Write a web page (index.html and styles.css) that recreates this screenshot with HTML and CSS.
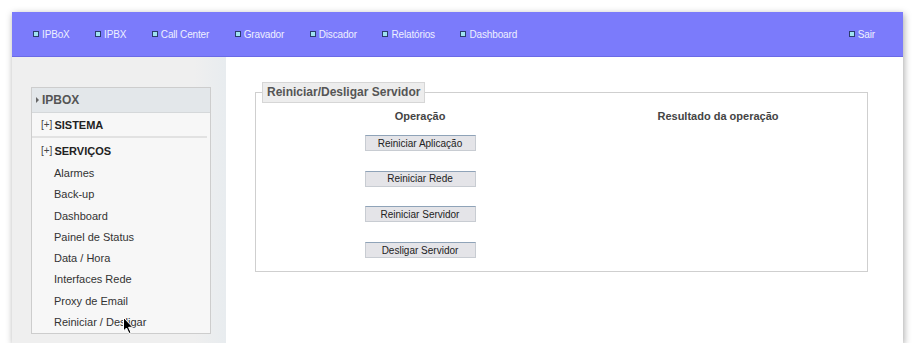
FILE: index.html
```html
<!DOCTYPE html>
<html lang="pt-BR">
<head>
  <meta charset="UTF-8">
  <title>IPBoX - Reiniciar / Desligar</title>
  <link rel="stylesheet" href="styles.css">
</head>
<body>
  <div class="window">
    <div class="topbar">
      <ul class="nav">
        <li><span class="bullet"></span>IPBoX</li>
        <li><span class="bullet"></span>IPBX</li>
        <li><span class="bullet"></span>Call Center</li>
        <li><span class="bullet"></span>Gravador</li>
        <li><span class="bullet"></span>Discador</li>
        <li><span class="bullet"></span>Relatórios</li>
        <li><span class="bullet"></span>Dashboard</li>
      </ul>
      <div class="nav-right"><span class="bullet"></span>Sair</div>
    </div>

    <div class="main">
      <div class="sidebar">
        <div class="menu">
          <div class="menu-title"><span class="arrow"></span>IPBOX</div>
          <div class="menu-group"><span class="plus">[+]</span>SISTEMA</div>
          <div class="menu-group open"><span class="plus">[+]</span>SERVIÇOS</div>
          <ul class="menu-items">
            <li>Alarmes</li>
            <li>Back-up</li>
            <li>Dashboard</li>
            <li>Painel de Status</li>
            <li>Data / Hora</li>
            <li>Interfaces Rede</li>
            <li>Proxy de Email</li>
            <li class="hover">Reiniciar / Desligar
              <svg class="cursor" width="12" height="18" viewBox="0 0 12 18">
                <path d="M0.5 0.5 L0.5 14 L3.5 11 L6 16.5 L8 15.6 L5.6 10.3 L9.8 10.3 Z" fill="#000" stroke="#fff" stroke-width="1"/>
              </svg>
            </li>
          </ul>
        </div>
      </div>

      <div class="content">
        <fieldset class="box">
          <legend>Reiniciar/Desligar Servidor</legend>
          <div class="ops">
            <div class="col">
              <div class="col-title">Operação</div>
              <button class="btn">Reiniciar Aplicação</button>
              <button class="btn">Reiniciar Rede</button>
              <button class="btn">Reiniciar Servidor</button>
              <button class="btn">Desligar Servidor</button>
            </div>
            <div class="col">
              <div class="col-title">Resultado da operação</div>
            </div>
          </div>
        </fieldset>
      </div>
    </div>
  </div>
</body>
</html>
```

FILE: styles.css
```css
body {
  margin: 0;
  background: #fff;
  font-family: "Liberation Sans", Arial, sans-serif;
}
.window {
  margin: 12px 0 0 12px;
  width: 891px;
  height: 331px;
  box-shadow: 1px 2px 7px rgba(0, 0, 0, 0.35);
  display: flex;
  flex-direction: column;
}
.topbar {
  height: 45px;
  background: #7b7bfb;
  border-bottom: 1px solid #6a6ae6;
  box-sizing: border-box;
  display: flex;
  align-items: center;
  justify-content: space-between;
  padding: 0 28px 0 21px;
  color: #eef0ff;
  font-size: 10px;
  letter-spacing: -0.15px;
}
.nav {
  list-style: none;
  margin: 0;
  padding: 0;
  display: flex;
  gap: 25.5px;
}
.nav li,
.nav-right {
  display: flex;
  align-items: center;
}
.bullet {
  width: 4px;
  height: 4px;
  background: #9fe3f0;
  border: 1px solid #2b3d6e;
  margin-right: 3px;
}
.main {
  flex: 1;
  display: flex;
}
.sidebar {
  width: 214px;
  background: linear-gradient(to right, #efefef 85%, #e8ecef);
  padding: 30px 0 0 19px;
  box-sizing: border-box;
}
.menu {
  width: 180px;
  border: 1px solid #cdcdcd;
  background: #f7f7f7;
  box-sizing: border-box;
  color: #333;
}
.menu-title {
  height: 24px;
  background: #e3e7ea;
  border-bottom: 1px solid #d5d8da;
  display: flex;
  align-items: center;
  padding-left: 4px;
  font-size: 12px;
  font-weight: bold;
  color: #555;
}
.arrow {
  width: 0;
  height: 0;
  border-left: 3px solid #666;
  border-top: 3px solid transparent;
  border-bottom: 3px solid transparent;
  margin-right: 3px;
}
.menu-group {
  height: 23px;
  display: flex;
  align-items: center;
  padding-left: 9px;
  margin-right: 3px;
  font-size: 11px;
  font-weight: bold;
  color: #222;
  border-bottom: 2px solid #e2e2e2;
}
.menu-group.open {
  border-bottom: none;
  height: 25px;
}
.plus {
  font-weight: normal;
  font-size: 10px;
  color: #444;
  margin-right: 2px;
}
.menu-items {
  list-style: none;
  margin: 0;
  padding: 0 0 0 22px;
  font-size: 11px;
  color: #333;
}
.menu-items li {
  height: 21.3px;
  line-height: 21.3px;
}
.menu-items li.hover {
  position: relative;
}
.cursor {
  position: absolute;
  left: 69px;
  top: 5px;
}
.content {
  flex: 1;
  background: #fff;
  padding: 25px 0 0 29px;
}
.box {
  width: 612px;
  height: 190px;
  margin: 0;
  padding: 0;
  border: 1px solid #cfcfcf;
  box-sizing: border-box;
}
.box legend {
  margin-left: 6px;
  padding: 2px 4px 3px;
  background: #ededed;
  border: 1px solid #d6d6d6;
  font-size: 12px;
  font-weight: bold;
  color: #555;
}
.ops {
  display: grid;
  grid-template-columns: 298px 298px;
  padding: 7px 0 0 15px;
}
.col {
  display: flex;
  flex-direction: column;
  align-items: center;
}
.col-title {
  font-size: 11px;
  font-weight: bold;
  color: #444;
  height: 14px;
  margin-bottom: 11px;
}
.btn {
  width: 111px;
  height: 16px;
  margin: 0 0 19.7px;
  padding: 0;
  background: #e4e4e8;
  border: 1px solid #c8ccd2;
  border-top: 1px solid #8fa3b8;
  font-family: "Liberation Sans", Arial, sans-serif;
  font-size: 10px;
  color: #222;
}
```
